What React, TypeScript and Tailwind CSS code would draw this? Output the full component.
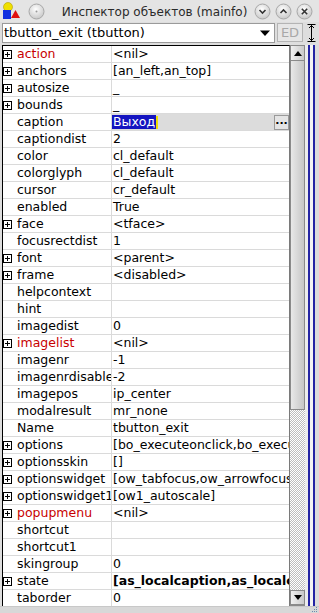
import React from "react";

type Row = { name: string; value: string; plus?: boolean; red?: boolean; bold?: boolean; edit?: boolean };

const rows: Row[] = [
  { name: "action", value: "<nil>", plus: true, red: true },
  { name: "anchors", value: "[an_left,an_top]", plus: true },
  { name: "autosize", value: "_", plus: true },
  { name: "bounds", value: "_", plus: true },
  { name: "caption", value: "Выход", edit: true },
  { name: "captiondist", value: "2" },
  { name: "color", value: "cl_default" },
  { name: "colorglyph", value: "cl_default" },
  { name: "cursor", value: "cr_default" },
  { name: "enabled", value: "True" },
  { name: "face", value: "<tface>", plus: true },
  { name: "focusrectdist", value: "1" },
  { name: "font", value: "<parent>", plus: true },
  { name: "frame", value: "<disabled>", plus: true },
  { name: "helpcontext", value: "" },
  { name: "hint", value: "" },
  { name: "imagedist", value: "0" },
  { name: "imagelist", value: "<nil>", plus: true, red: true },
  { name: "imagenr", value: "-1" },
  { name: "imagenrdisable", value: "-2" },
  { name: "imagepos", value: "ip_center" },
  { name: "modalresult", value: "mr_none" },
  { name: "Name", value: "tbutton_exit" },
  { name: "options", value: "[bo_executeonclick,bo_executeonkey]", plus: true },
  { name: "optionsskin", value: "[]", plus: true },
  { name: "optionswidget", value: "[ow_tabfocus,ow_arrowfocus,ow_destroywidgets]", plus: true },
  { name: "optionswidget1", value: "[ow1_autoscale]", plus: true },
  { name: "popupmenu", value: "<nil>", plus: true, red: true },
  { name: "shortcut", value: "" },
  { name: "shortcut1", value: "" },
  { name: "skingroup", value: "0" },
  { name: "state", value: "[as_localcaption,as_localcolor]", plus: true, bold: true },
  { name: "taborder", value: "0" },
];

function PlusBox() {
  return (
    <svg width="9" height="9" viewBox="0 0 9 9" className="shrink-0">
      <rect x="0.5" y="0.5" width="8" height="8" fill="#fff" stroke="#000" />
      <path d="M2 4.5H7M4.5 2V7" stroke="#000" />
    </svg>
  );
}

function CircleBtn({ kind }: { kind: "down" | "up" | "x" | "dot" }) {
  return (
    <svg width="17" height="17" viewBox="0 0 17 17">
      <defs>
        <radialGradient id={"g" + kind} cx="45%" cy="35%" r="70%">
          <stop offset="0%" stopColor="#ffffff" />
          <stop offset="100%" stopColor="#c4c4c4" />
        </radialGradient>
      </defs>
      <circle cx="8.5" cy="8.5" r="7.5" fill={"url(#g" + kind + ")"} stroke="#a8a8a8" />
      {kind === "down" && <path d="M5.5 7L8.5 10L11.5 7" stroke="#333" strokeWidth="1.6" fill="none" />}
      {kind === "up" && <path d="M5.5 10L8.5 7L11.5 10" stroke="#333" strokeWidth="1.6" fill="none" />}
      {kind === "x" && <path d="M5.8 5.8L11.2 11.2M11.2 5.8L5.8 11.2" stroke="#333" strokeWidth="1.6" />}
      {kind === "dot" && <circle cx="8.5" cy="8.5" r="1" fill="#999" />}
    </svg>
  );
}

function AppIcon() {
  return (
    <svg width="20" height="20" viewBox="0 0 20 20">
      <circle cx="7" cy="6" r="4.5" fill="#f0e000" stroke="#b0a000" strokeWidth="0.6" />
      <rect x="2" y="9" width="8" height="9" fill="#1030e0" />
      <path d="M10 17L14.5 9L19 17Z" fill="#e01010" />
    </svg>
  );
}

export default function App() {
  return (
    <div className="w-[319px] h-[613px] bg-[#dedede] flex flex-col overflow-hidden font-['DejaVu_Sans',sans-serif] text-[12.5px] text-black">
      {/* Title bar */}
      <div className="h-[22px] flex items-center bg-[#e4e4e4] relative shrink-0">
        <div className="pl-[1px] flex items-center">
          <AppIcon />
        </div>
        <div className="ml-[7px] flex items-center">
          <CircleBtn kind="dot" />
        </div>
        <div className="flex-1 text-center text-[#2a2a2a] text-[12px] whitespace-nowrap pl-[10px] pt-[1px]">Инспектор объектов (mainfo)</div>
        <div className="flex items-center gap-[4px] pr-[6px]">
          <CircleBtn kind="down" />
          <CircleBtn kind="up" />
          <CircleBtn kind="x" />
        </div>
      </div>
      {/* Combo row */}
      <div className="h-[23px] flex items-start pt-[1px] shrink-0">
        <div className="ml-[2px] w-[273px] h-[20px] bg-white border border-[#9a9a9a] flex items-center">
          <div className="flex-1 pl-[1px] whitespace-nowrap overflow-hidden text-[13px]">tbutton_exit (tbutton)</div>
          <svg width="12" height="10" viewBox="0 0 12 10" className="mr-[3px]">
            <path d="M1 2.5H11L6 8Z" fill="#000" />
          </svg>
        </div>
        <div className="ml-[2px] w-[26px] h-[19px] bg-[#e6e6e6] border border-[#b4b4b4] flex items-center justify-center text-[#a8a8a8] text-[13px]">ED</div>
        <div className="ml-[2px] w-[13px] h-[20px] flex items-center justify-center">
          <svg width="11" height="20" viewBox="0 0 11 20">
            <path d="M1.5 1.5H9.5M1.5 18.5H9.5M5.5 2V18M3 5L5.5 2.5L8 5M3 15L5.5 17.5L8 15" stroke="#000" strokeWidth="1" fill="none" />
          </svg>
        </div>
      </div>
      {/* Grid area */}
      <div className="h-[561px] flex shrink-0">
        <div className="w-[2px]" />
        <div className="w-[288px] border-l border-t border-r border-l-black border-t-black border-r-[#7a7a7a] bg-white flex flex-col overflow-hidden">
          {rows.map((r) => (
            <div key={r.name} className="h-[17px] shrink-0 flex border-b border-[#dadada]">
              <div className="w-[109px] shrink-0 border-r border-[#dadada] flex items-center overflow-hidden">
                <div className="w-[14px] shrink-0 flex items-center">{r.plus && <PlusBox />}</div>
                <span className={"whitespace-nowrap " + (r.red ? "text-[#c80000]" : "")}>{r.name}</span>
              </div>
              {r.edit ? (
                <div className="flex-1 bg-[#dcdcdc] flex items-center overflow-hidden">
                  <span className="bg-[#1414c0] text-white leading-[13px] h-[14px] pl-[1px] pr-[1px]">{r.value}</span>
                  <span className="w-[2px] h-[13px] bg-[#f0e000]" />
                  <div className="flex-1" />
                  <div className="w-[15px] h-[15px] bg-[#e4e4e4] border border-[#9a9a9a] flex items-center justify-center font-bold text-[11px] leading-none pb-[4px]">...</div>
                </div>
              ) : (
                <div className={"flex-1 pl-[1px] flex items-center overflow-hidden whitespace-nowrap " + (r.bold ? "font-bold" : "")}>
                  {r.value}
                </div>
              )}
            </div>
          ))}
        </div>
        {/* Scrollbar */}
        <div className="w-[15px] flex flex-col border-b border-[#8a8a8a]">
          <div className="h-[16px] shrink-0 bg-gradient-to-r from-[#f0f0f0] to-[#cacaca] border border-[#8a8a8a] flex items-center justify-center">
            <svg width="8" height="5" viewBox="0 0 8 5"><path d="M0 5L4 0L8 5Z" fill="#000" /></svg>
          </div>
          <div className="h-[349px] shrink-0 bg-gradient-to-r from-[#e8e8e8] to-[#c6c6c6] border border-t-0 border-[#8a8a8a]" />
          <div className="flex-1 bg-[repeating-conic-gradient(#bdbdbd_0%_25%,#ffffff_0%_50%)] bg-[length:2px_2px]" />
          <div className="h-[15px] shrink-0 bg-gradient-to-r from-[#f0f0f0] to-[#cacaca] border border-[#8a8a8a] flex items-center justify-center">
            <svg width="8" height="5" viewBox="0 0 8 5"><path d="M0 0L8 0L4 5Z" fill="#000" /></svg>
          </div>
        </div>
        {/* Splitter decoration */}
        <div className="flex-1 flex">
          <div className="w-[3px] bg-[#ececec]" />
          <div className="w-[2px] bg-[#2424a4]" />
          <div className="w-[3px] bg-[#f4f4f4]" />
          <div className="w-[2px] bg-[#2424a4]" />
          <div className="flex-1 bg-[#dcdcdc]" />
        </div>
      </div>
      {/* Bottom strip */}
      <div className="flex-1 bg-[#d8d8d8] border-t border-[#c8c8c8] flex justify-end items-end pr-[1px] pb-[1px]">
        <svg width="6" height="5" viewBox="0 0 6 5">
          <rect x="4" y="0" width="1" height="1" fill="#6a8ab0" />
          <rect x="2" y="2" width="1" height="1" fill="#6a8ab0" />
          <rect x="4" y="2" width="1" height="1" fill="#6a8ab0" />
          <rect x="0" y="4" width="1" height="1" fill="#6a8ab0" />
          <rect x="2" y="4" width="1" height="1" fill="#6a8ab0" />
          <rect x="4" y="4" width="1" height="1" fill="#6a8ab0" />
        </svg>
      </div>
    </div>
  );
}
